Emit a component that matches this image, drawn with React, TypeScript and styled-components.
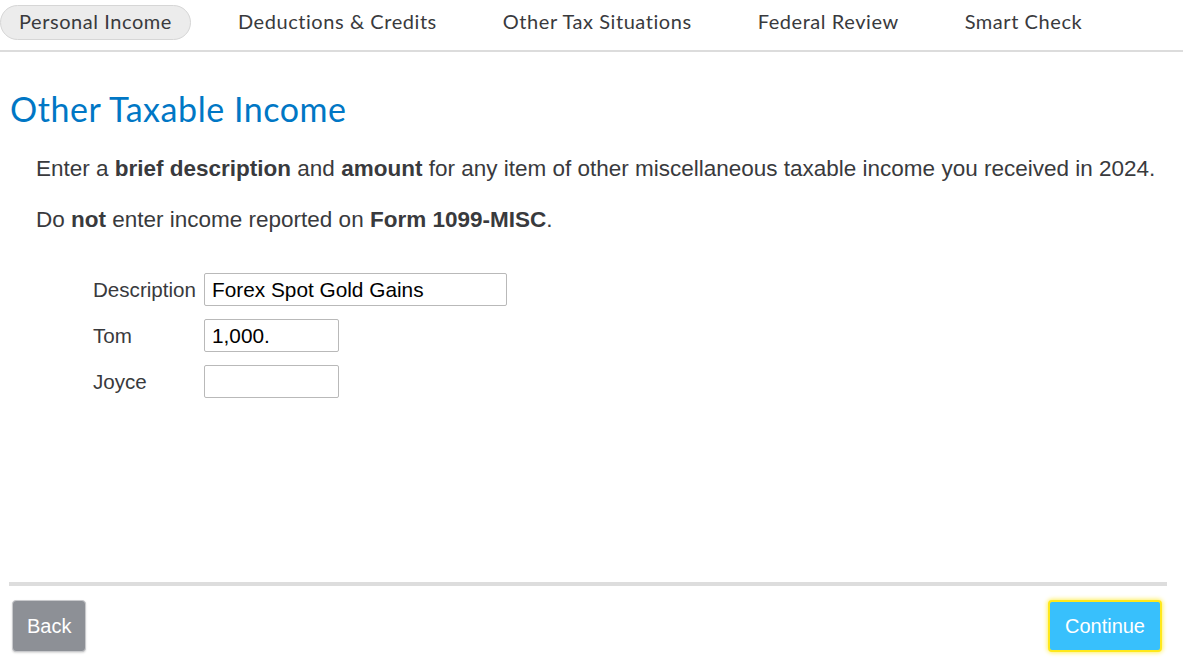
import React, { useState } from "react";
import styled, { createGlobalStyle } from "styled-components";

const GlobalStyle = createGlobalStyle`
  html, body {
    margin: 0;
    padding: 0;
    background: #ffffff;
  }
  body {
    font-family: "Liberation Sans", Arial, sans-serif;
  }
  * {
    box-sizing: border-box;
  }
`;

const Page = styled.div`
  min-height: 100vh;
  display: flex;
  flex-direction: column;
`;

const Nav = styled.nav`
  height: 52px;
  display: flex;
  align-items: flex-start;
  gap: 28px;
  padding-top: 5px;
  border-bottom: 2px solid #dcdcdc;
`;

const Tab = styled.div<{ $active?: boolean }>`
  height: 35px;
  display: flex;
  align-items: center;
  padding: 0 18px 3px 18px;
  border-radius: 18px;
  font-family: Lato, "Noto Sans", sans-serif;
  font-size: 20px;
  letter-spacing: 0.56px;
  color: #393a3d;
  background: ${(p) => (p.$active ? "#ececec" : "transparent")};
  border: 1px solid ${(p) => (p.$active ? "#d6d6d6" : "transparent")};
  white-space: nowrap;
`;

const Main = styled.main`
  flex: 1;
  padding: 36px 10px 0 10px;
`;

const Heading = styled.h1`
  margin: 0 0 25px 0;
  font-family: Lato, "Noto Sans", sans-serif;
  font-weight: 400;
  font-size: 34px;
  letter-spacing: 0.55px;
  color: #0077c5;
`;

const Intro = styled.p`
  margin: 0 0 21px 26px;
  font-size: 22.5px;
  line-height: 30px;
  color: #393a3d;

  b {
    font-weight: 700;
  }
`;

const Form = styled.div`
  margin: 38px 0 0 83px;
  display: grid;
  grid-template-columns: 111px auto;
  row-gap: 13px;
  align-items: center;
`;

const Label = styled.label`
  font-size: 20.6px;
  color: #393a3d;
`;

const Field = styled.input<{ $wide?: boolean }>`
  width: ${(p) => (p.$wide ? "303px" : "135px")};
  height: 33px;
  border: 1px solid #b9b9b9;
  border-radius: 2px;
  padding: 0 7px;
  font-family: "Liberation Sans", Arial, sans-serif;
  font-size: 20.8px;
  color: #000;
  outline: none;
`;

const Divider = styled.hr`
  margin: 0 16px 0 9px;
  border: none;
  height: 4px;
  background: #dddddd;
`;

const Footer = styled.footer`
  display: flex;
  justify-content: space-between;
  padding: 14px 21px 15px 12px;
`;

const Button = styled.button<{ $primary?: boolean }>`
  height: 52px;
  padding: 0 ${(p) => (p.$primary ? "15px" : "14px")};
  border-radius: 4px;
  font-family: "Liberation Sans", Arial, sans-serif;
  font-size: 20px;
  color: #ffffff;
  cursor: pointer;
  background: ${(p) => (p.$primary ? "#38c0fc" : "#8d9096")};
  border: ${(p) => (p.$primary ? "2px solid #ffe81a" : "1px solid #c8c9cc")};
  box-shadow: ${(p) =>
    p.$primary ? "0 0 4px 1px rgba(255, 230, 0, 0.6)" : "0 1px 2px rgba(0,0,0,0.15)"};
`;

const tabs = [
  "Personal Income",
  "Deductions & Credits",
  "Other Tax Situations",
  "Federal Review",
  "Smart Check",
];

const App: React.FC = () => {
  const [description, setDescription] = useState("Forex Spot Gold Gains");
  const [tom, setTom] = useState("1,000.");
  const [joyce, setJoyce] = useState("");

  return (
    <Page>
      <GlobalStyle />
      <Nav>
        {tabs.map((t, i) => (
          <Tab key={t} $active={i === 0}>
            {t}
          </Tab>
        ))}
      </Nav>
      <Main>
        <Heading>Other Taxable Income</Heading>
        <Intro>
          Enter a <b>brief description</b> and <b>amount</b> for any item of other
          miscellaneous taxable income you received in 2024.
        </Intro>
        <Intro>
          Do <b>not</b> enter income reported on <b>Form 1099-MISC</b>.
        </Intro>
        <Form>
          <Label>Description</Label>
          <Field $wide value={description} onChange={(e) => setDescription(e.target.value)} />
          <Label>Tom</Label>
          <Field value={tom} onChange={(e) => setTom(e.target.value)} />
          <Label>Joyce</Label>
          <Field value={joyce} onChange={(e) => setJoyce(e.target.value)} />
        </Form>
      </Main>
      <Divider />
      <Footer>
        <Button>Back</Button>
        <Button $primary>Continue</Button>
      </Footer>
    </Page>
  );
};

export default App;
